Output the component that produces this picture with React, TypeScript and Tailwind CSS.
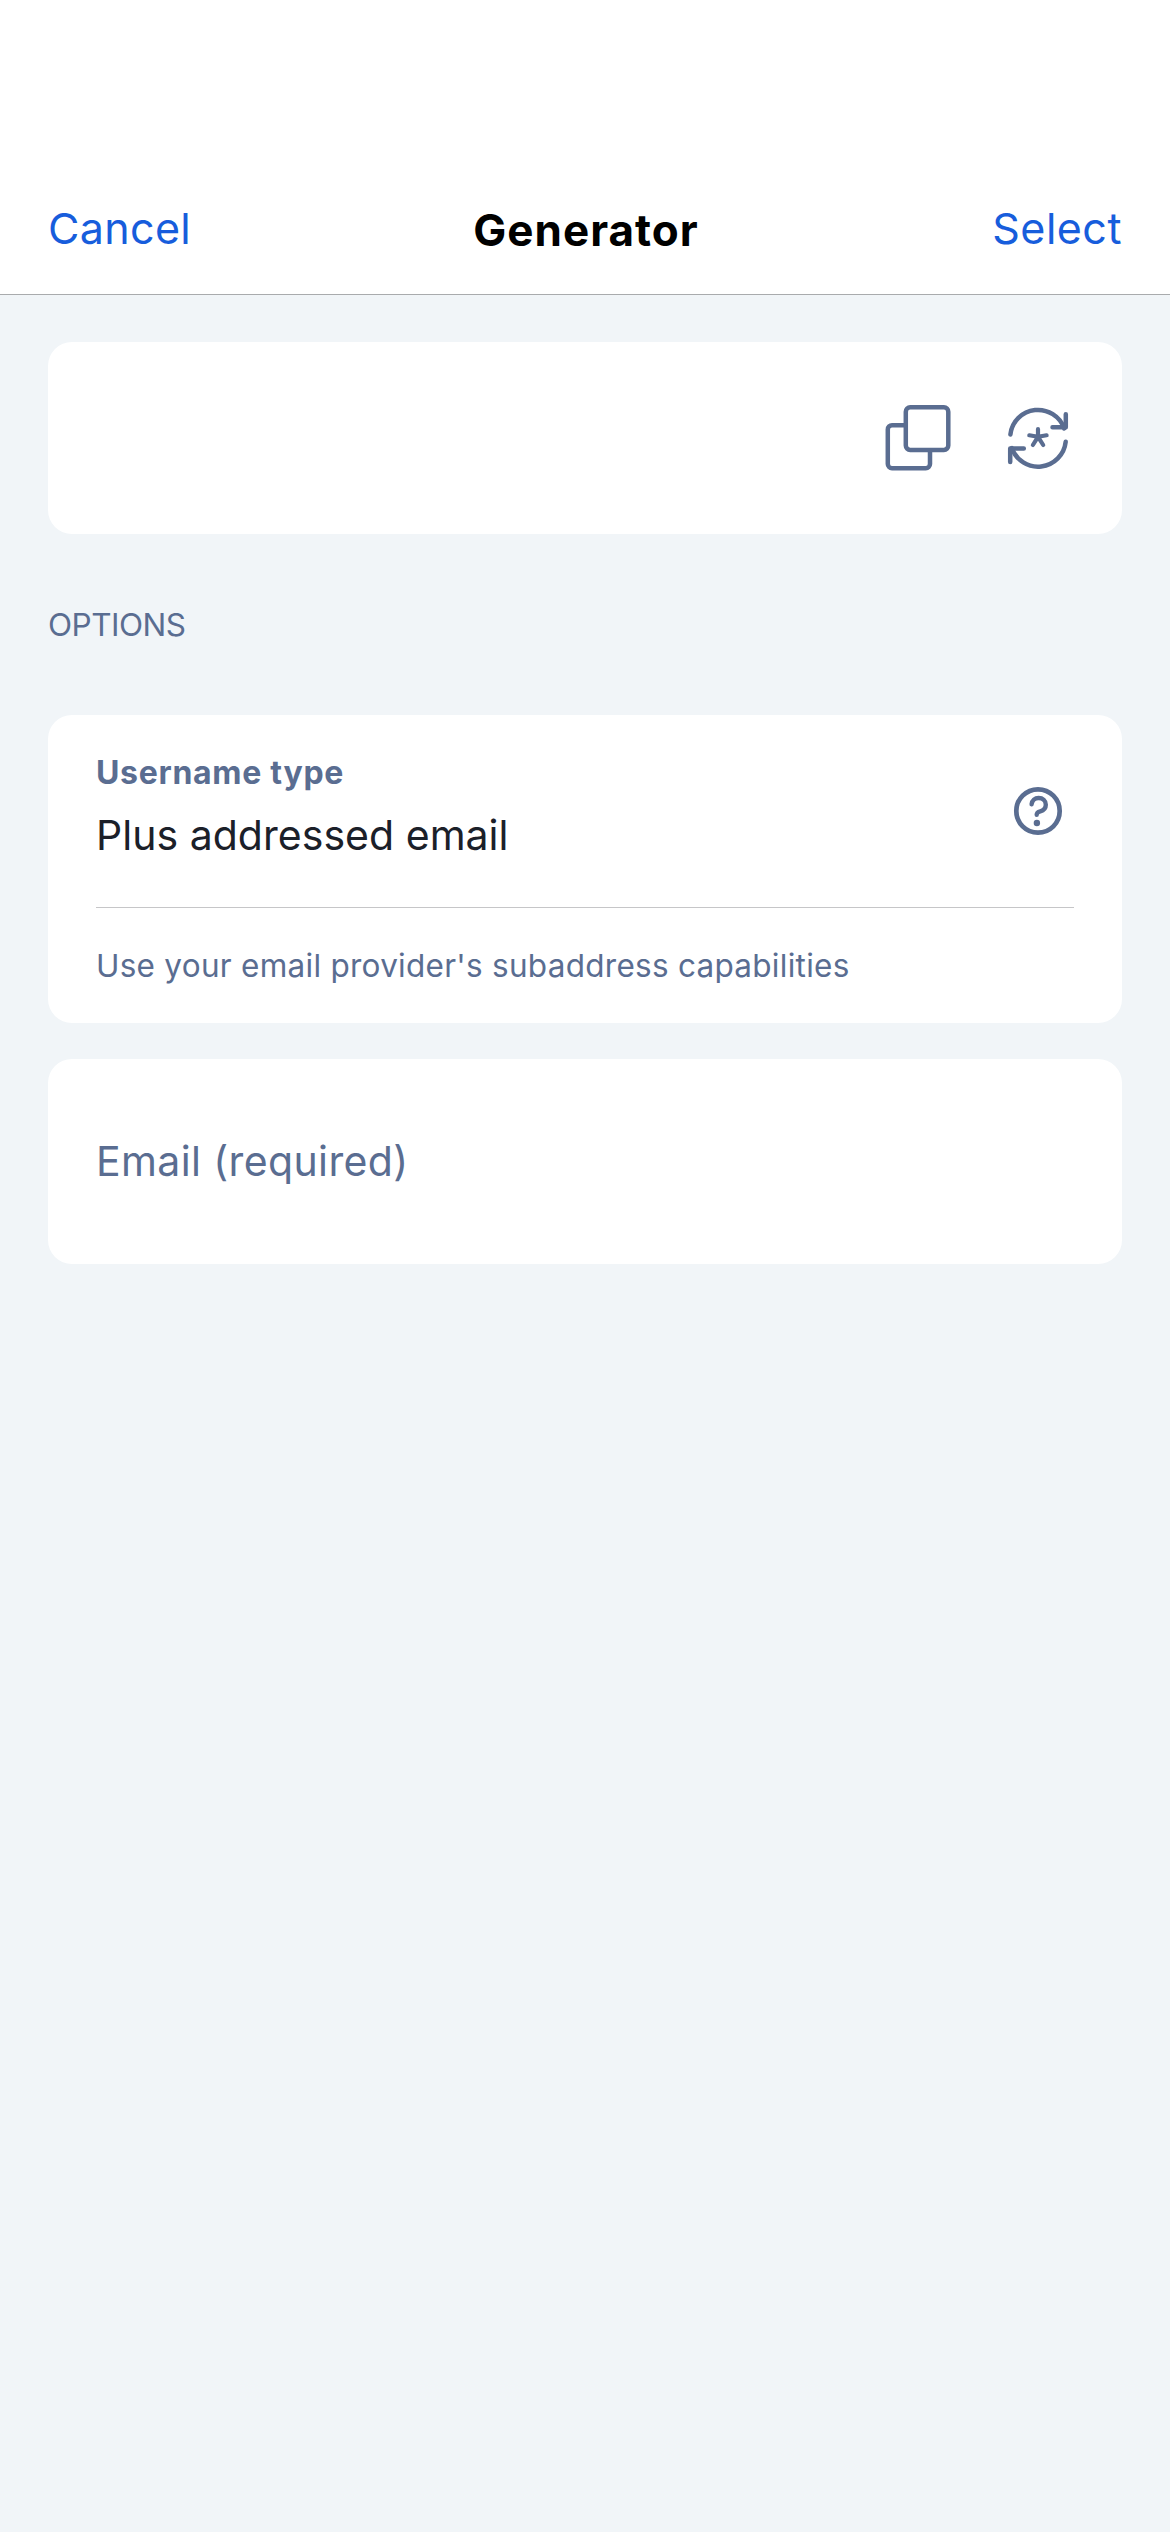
import React from "react";

function CopyIcon() {
  return (
    <svg className="h-20 w-20" viewBox="10 8 80 80" fill="none" stroke="currentColor" strokeWidth="4.5">
      <path d="M34.5 35.2H22a4.2 4.2 0 0 0-4.2 4.2V74a4.2 4.2 0 0 0 4.2 4.2h33.8A4.2 4.2 0 0 0 60 74V61" />
      <rect x="35.8" y="17.3" width="42.5" height="42.7" rx="4.4" />
    </svg>
  );
}

function GenerateIcon() {
  return (
    <svg className="h-20 w-20" viewBox="10 8 80 80" fill="none" stroke="currentColor" strokeWidth="4.5" strokeLinecap="round" strokeLinejoin="round">
      <path d="M20.4 44.4A27.8 27.8 0 0 1 74.2 38.4" />
      <path d="M75.8 24.2v13.1H62.5" />
      <path d="M75.7 51.8A27.8 27.8 0 0 1 21.8 58" />
      <path d="M33.8 58.6H20.2V72" />
      <path strokeWidth="4.2" d="M48 46.800v-7.600M48 46.800l8.600-1.500M48 46.800l-8.700-1.500M48 46.800l-5.100 8.200M48 46.800l5.200 8.200" />
    </svg>
  );
}

function HelpIcon() {
  return (
    <svg className="h-20 w-20" viewBox="8 6 80 80" fill="none" stroke="currentColor" strokeLinecap="round" strokeLinejoin="round">
      <circle cx="48" cy="46" r="21.7" strokeWidth="4.7" />
      <path strokeWidth="4.4" d="M41.6 39.2c.5-3.8 3.3-6.200 7-6.200 4.100 0 7.200 2.800 7.200 6.700 0 3.500-2.300 5.700-5.500 6.600-2.300.6-3.600 1.200-3.600 3.500" />
      <circle cx="46.9" cy="58" r="3.2" fill="currentColor" stroke="none" />
    </svg>
  );
}

export default function App() {
  return (
    <div className="flex min-h-[2532px] w-full flex-col bg-[#f1f5f8] font-['Inter',sans-serif] text-[#5a6d91]">
      <header className="grid h-[295px] grid-cols-3 border-b border-[#a9abad] bg-white px-12 pt-[198px] text-[43px] leading-[60px]">
        <button className="self-start text-left tracking-[0.34px] text-[#175ddc]">Cancel</button>
        <h1 className="self-start pt-[2px] pl-[2px] text-center text-[44px] font-bold tracking-[1px] text-black">Generator</h1>
        <button className="self-start text-right tracking-[0.5px] text-[#175ddc]">Select</button>
      </header>

      <main className="flex flex-col px-12 pt-[47px]">
        <section className="flex h-[192px] items-center justify-end gap-10 rounded-[24px] bg-white pr-[42px]">
          <CopyIcon />
          <GenerateIcon />
        </section>

        <h2 className="mt-[71px] text-[31.5px] leading-10 tracking-[-0.52px]">OPTIONS</h2>

        <section className="mt-[70px] flex h-[308px] flex-col rounded-[24px] bg-white px-12 pt-[38px]">
          <div className="flex h-[155px] justify-between border-b border-[#c6c6c8]">
            <div>
              <p className="text-[32px] leading-10 font-bold tracking-[0.7px]">Username type</p>
              <p className="mt-[14px] text-[41px] leading-[56px] tracking-[0.03px] text-[#1b2029]">Plus addressed email</p>
            </div>
            <div className="mt-[18px] -mr-1">
              <HelpIcon />
            </div>
          </div>
          <p className="mt-[38px] text-[31.5px] leading-10 tracking-[0.27px]">Use your email provider's subaddress capabilities</p>
        </section>

        <section className="mt-9 h-[205px] rounded-[24px] bg-white px-12 pt-[74px]">
          <p className="text-[41px] leading-[56px] tracking-[0.38px]">Email (required)</p>
        </section>
      </main>
    </div>
  );
}
